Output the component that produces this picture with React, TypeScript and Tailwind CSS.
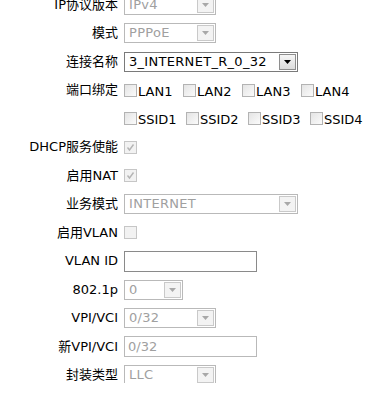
import React from "react"

const font = { fontFamily: '"DejaVu Sans", "Noto Sans CJK SC", sans-serif' }

function Arrow({ disabled }: { disabled?: boolean }) {
  return (
    <svg width="7" height="4" viewBox="0 0 7 4">
      <path d="M0 0 H7 L3.5 4 Z" fill={disabled ? "#a8a8a8" : "#000"} />
    </svg>
  )
}

function Select({ value, width, disabled = true }: { value: string; width: string; disabled?: boolean }) {
  return (
    <div
      className={`flex h-[20px] items-center border ${width} ${
        disabled ? "border-[#b9b9b9] text-[#a0a0a0]" : "border-[#7a7a7a] text-black"
      } bg-white`}
    >
      <span className="flex-1 overflow-hidden whitespace-nowrap pl-[4px] text-[13px] leading-[16px] tracking-[0.3px]">
        {value}
      </span>
      <span
        className={`m-[1px] flex h-[16px] w-[17px] shrink-0 items-center justify-center border ${
          disabled ? "border-[#c9c9c9] bg-[#f3f3f3]" : "border-[#8e8e8e] bg-gradient-to-b from-[#f6f6f6] to-[#dcdcdc]"
        }`}
      >
        <Arrow disabled={disabled} />
      </span>
    </div>
  )
}

function TextInput({ value = "", disabled = false }: { value?: string; disabled?: boolean }) {
  return (
    <div
      className={`flex h-[21px] w-[133px] items-center border bg-white pl-[3px] text-[13px] leading-[16px] ${
        disabled ? "border-[#b9b9b9] text-[#a0a0a0]" : "border-[#8a8a8a] text-black"
      }`}
    >
      {value}
    </div>
  )
}

function Box({ checked = false, disabled = false }: { checked?: boolean; disabled?: boolean }) {
  return (
    <span
      className={`flex h-[13px] w-[13px] shrink-0 items-center justify-center border ${
        disabled ? "border-[#c6c6c6] bg-[#f2f2f2]" : "border-[#b3b3b3] bg-gradient-to-br from-[#e4e4e4] to-[#fbfbfb]"
      }`}
    >
      {checked && (
        <svg width="9" height="9" viewBox="0 0 9 9">
          <path d="M1.5 4.5 L3.5 7 L7.5 1.5" stroke="#b4b4b4" strokeWidth="1.4" fill="none" />
        </svg>
      )}
    </span>
  )
}

function Row({ label, children }: { label: string; children: React.ReactNode }) {
  return (
    <div className="flex h-[28.5px] items-center">
      <div className="w-[118px] shrink-0 text-right text-[13px] leading-[16px] text-black">{label}</div>
      <div className="ml-[6px] flex items-center">{children}</div>
    </div>
  )
}

function Options({ items, itemWidth }: { items: string[]; itemWidth: string }) {
  return (
    <div className="flex">
      {items.map((item) => (
        <label key={item} className={`flex items-end ${itemWidth}`}>
          <Box />
          <span className="ml-[1px] text-[13px] leading-[11px] text-black">{item}</span>
        </label>
      ))}
    </div>
  )
}

export default function App() {
  return (
    <div className="h-[383px] w-[370px] overflow-hidden bg-white" style={font}>
      <div className="-mt-[9.75px]">
        <Row label="IP协议版本">
          <Select value="IPv4" width="w-[92px]" />
        </Row>
        <Row label="模式">
          <Select value="PPPoE" width="w-[92px]" />
        </Row>
        <Row label="连接名称">
          <Select value="3_INTERNET_R_0_32" width="w-[174px]" disabled={false} />
        </Row>
        <Row label="端口绑定">
          <Options items={["LAN1", "LAN2", "LAN3", "LAN4"]} itemWidth="w-[59px]" />
        </Row>
        <Row label="">
          <Options items={["SSID1", "SSID2", "SSID3", "SSID4"]} itemWidth="w-[62px]" />
        </Row>
        <Row label="DHCP服务使能">
          <Box checked disabled />
        </Row>
        <Row label="启用NAT">
          <Box checked disabled />
        </Row>
        <Row label="业务模式">
          <Select value="INTERNET" width="w-[174px]" />
        </Row>
        <Row label="启用VLAN">
          <Box disabled />
        </Row>
        <Row label="VLAN ID">
          <TextInput />
        </Row>
        <Row label="802.1p">
          <Select value="0" width="w-[59px]" />
        </Row>
        <Row label="VPI/VCI">
          <Select value="0/32" width="w-[92px]" />
        </Row>
        <Row label="新VPI/VCI">
          <TextInput value="0/32" disabled />
        </Row>
        <Row label="封装类型">
          <Select value="LLC" width="w-[92px]" />
        </Row>
      </div>
    </div>
  )
}
